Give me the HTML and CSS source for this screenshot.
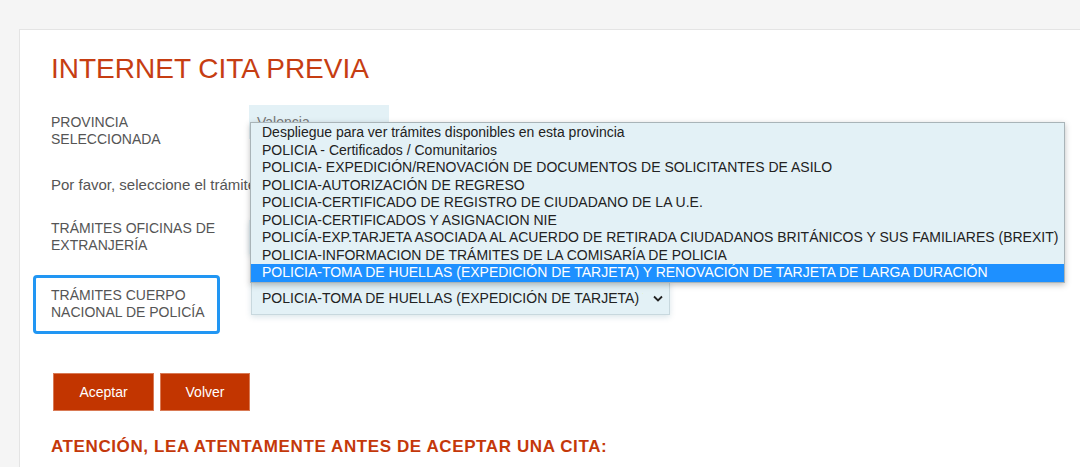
FILE: index.html
```html
<!DOCTYPE html>
<html lang="es">
<head>
    <meta charset="UTF-8">
    <meta name="viewport" content="width=device-width, initial-scale=1.0">
    <title>Internet Cita Previa</title>
    <link rel="stylesheet" href="styles.css">
</head>
<body>
    <!-- Contenedor principal -->
    <div class="card">
        <h1>INTERNET CITA PREVIA</h1>

        <div class="row row-provincia">
            <div class="label">PROVINCIA<br>SELECCIONADA</div>
            <div class="field field-provincia">Valencia</div>
        </div>

        <p class="intro">Por favor, seleccione el trámite que desea realizar</p>

        <div class="row row-extranjeria">
            <div class="label">TRÁMITES OFICINAS DE<br>EXTRANJERÍA</div>
            <div class="field select-box">Despliegue para ver trámites disponibles en esta provincia</div>
        </div>

        <div class="row row-policia">
            <div class="label focused">TRÁMITES CUERPO<br>NACIONAL DE POLICÍA</div>
            <div class="select-box select-policia">
                <span class="select-text">POLICIA-TOMA DE HUELLAS (EXPEDICIÓN DE TARJETA) Y RENOVACIÓN DE TARJETA DE LARGA DURACIÓN</span>
                <svg class="chevron" width="10" height="7" viewBox="0 0 10 7"><path d="M1 1.5 L5 5.5 L9 1.5" fill="none" stroke="#222" stroke-width="1.8"/></svg>
            </div>
        </div>

        <div class="actions">
            <button class="btn">Aceptar</button>
            <button class="btn btn-volver">Volver</button>
        </div>

        <h3 class="atencion">ATENCIÓN, LEA ATENTAMENTE ANTES DE ACEPTAR UNA CITA:</h3>

        <!-- Lista desplegada del select -->
        <ul class="dropdown">
            <li>Despliegue para ver trámites disponibles en esta provincia</li>
            <li>POLICIA - Certificados / Comunitarios</li>
            <li>POLICIA- EXPEDICIÓN/RENOVACIÓN DE DOCUMENTOS DE SOLICITANTES DE ASILO</li>
            <li>POLICIA-AUTORIZACIÓN DE REGRESO</li>
            <li>POLICIA-CERTIFICADO DE REGISTRO DE CIUDADANO DE LA U.E.</li>
            <li>POLICIA-CERTIFICADOS Y ASIGNACION NIE</li>
            <li>POLICÍA-EXP.TARJETA ASOCIADA AL ACUERDO DE RETIRADA CIUDADANOS BRITÁNICOS Y SUS FAMILIARES (BREXIT)</li>
            <li>POLICIA-INFORMACION DE TRÁMITES DE LA COMISARÍA DE POLICIA</li>
            <li class="selected">POLICIA-TOMA DE HUELLAS (EXPEDICIÓN DE TARJETA) Y RENOVACIÓN DE TARJETA DE LARGA DURACIÓN</li>
        </ul>
    </div>
</body>
</html>
```

FILE: styles.css
```css
/* CSS */
body {
    font-family: "Liberation Sans", Arial, sans-serif;
    background-color: #f5f5f5;
    margin: 0;
    padding: 29px 0 0 19px;
    overflow: hidden;
}

.card {
    position: relative;
    width: 1100px;
    height: 500px;
    background-color: white;
    border: 1px solid #e4e4e4;
    padding: 0 0 0 31px;
    box-sizing: border-box;
}

h1 {
    margin: 22px 0 0 0;
    font-size: 28px;
    font-weight: normal;
    line-height: 34px;
    color: #c63d12;
}

.row {
    display: flex;
    align-items: flex-start;
}

.label {
    width: 198px;
    font-size: 14px;
    line-height: 17px;
    color: #555;
}

.row-provincia {
    margin-top: 19px;
}

.row-provincia .label {
    padding-top: 9px;
}

.field {
    background-color: #e3f1f6;
    font-size: 14px;
    color: #777;
    box-sizing: border-box;
}

.field-provincia {
    width: 140px;
    height: 34px;
    padding: 9px 8px;
}

.intro {
    margin: 28px 0 0 0;
    font-size: 15px;
    line-height: 18px;
    color: #555;
}

.row-extranjeria {
    margin-top: 26px;
}

.select-box {
    display: flex;
    align-items: center;
    flex-shrink: 0;
    background-color: #e3f1f6;
    font-size: 14px;
    color: #222;
    box-sizing: border-box;
    width: 419px;
    height: 34px;
    padding: 0 6px 0 10px;
    box-shadow: 0 2px 6px rgba(0, 80, 110, 0.15);
}

.row-policia {
    margin-top: 21px;
    margin-left: -18px;
}

.row-policia .select-box {
    margin-left: 31px;
    margin-top: 6px;
    border: 1px solid #c8d8de;
}

.focused {
    width: 187px;
    flex-shrink: 0;
    box-sizing: border-box;
    padding: 9px 4px 10px 15px;
    border: 3px solid #2196f3;
    border-radius: 4px;
    white-space: nowrap;
}

.select-text {
    flex: 1;
    white-space: nowrap;
    overflow: hidden;
    margin-right: 10px;
}

.chevron {
    flex-shrink: 0;
}

.actions {
    display: flex;
    gap: 6px;
    margin-top: 39px;
    margin-left: 2px;
}

.btn {
    font-family: "Liberation Sans", Arial, sans-serif;
    font-size: 14px;
    color: white;
    background-color: #c23500;
    border: 1px solid #d97a55;
    width: 101px;
    height: 38px;
    cursor: pointer;
}

.btn-volver {
    width: 90px;
}

.atencion {
    margin: 26px 0 0 0;
    font-size: 17px;
    font-weight: bold;
    color: #c4380a;
    letter-spacing: 0.6px;
}

/* Liste ouverte du select */
.dropdown {
    position: absolute;
    left: 230px;
    top: 92px;
    width: 813px;
    margin: 0;
    padding: 1px 0 0 0;
    list-style-type: none;
    background-color: #e3f1f6;
    border: 1px solid #a9b4b8;
    box-shadow: 0 2px 6px rgba(0, 0, 0, 0.25);
    font-size: 14px;
    color: #222;
}

.dropdown li {
    height: 17.5px;
    line-height: 17.5px;
    padding-left: 11px;
    white-space: nowrap;
}

.dropdown li.selected {
    background-color: #1e90ff;
    color: white;
}
```
